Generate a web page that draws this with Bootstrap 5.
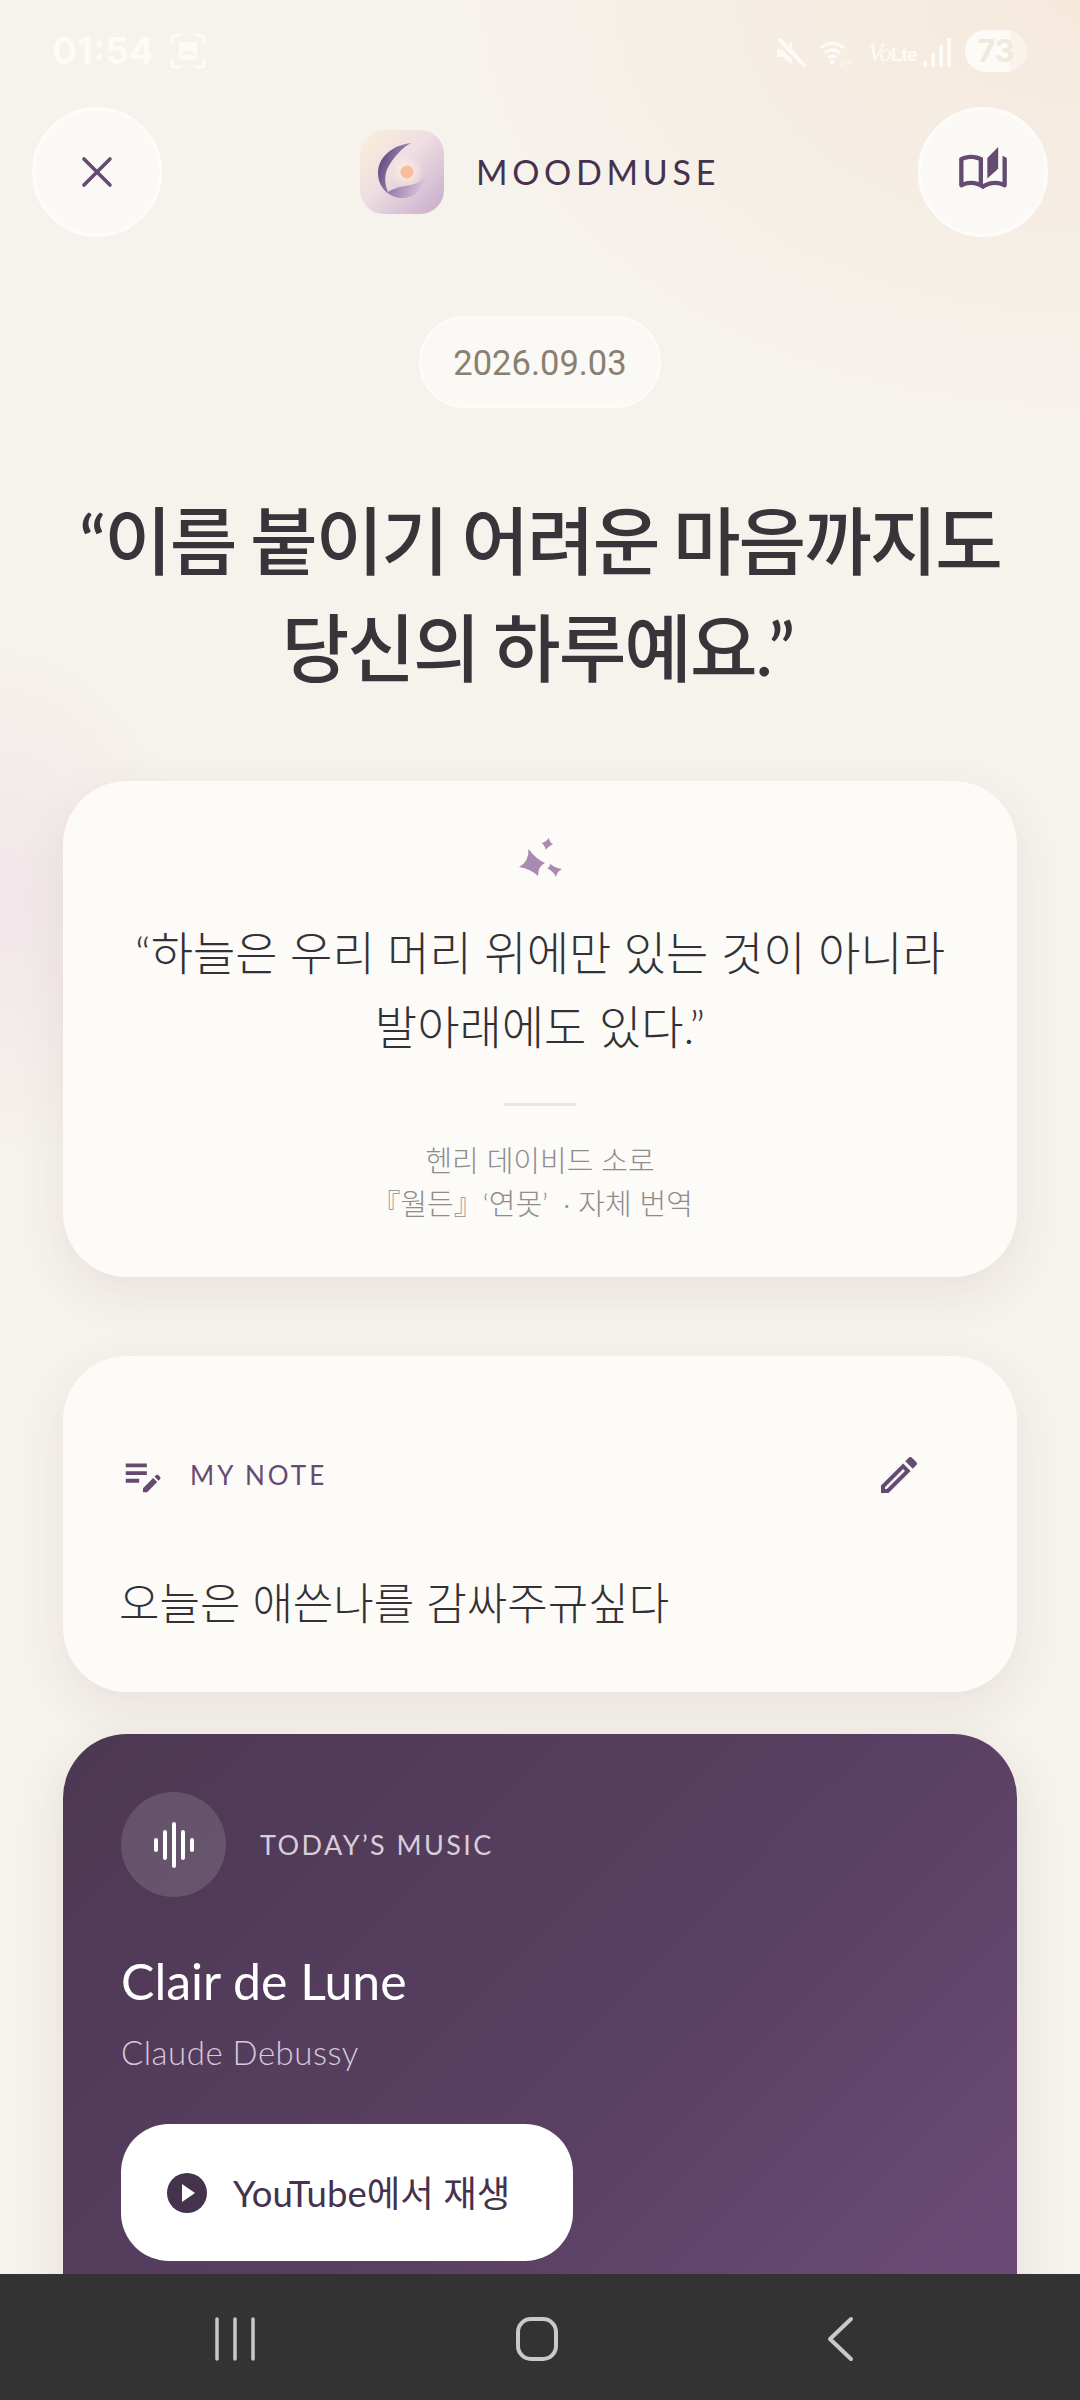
<!DOCTYPE html>
<html lang="ko">
<head>
  <meta charset="UTF-8">
  <meta name="viewport" content="width=device-width, initial-scale=1.0">
  <title>MoodMuse</title>
  <link href="https://cdn.jsdelivr.net/npm/bootstrap@5.3.0/dist/css/bootstrap.min.css" rel="stylesheet">
  <style>
    html, body { height: 100%; }
    body {
      width: 1080px;
      height: 2400px;
      overflow: hidden;
      font-family: Lato, "Noto Sans CJK KR", sans-serif;
      color: #3a3338;
      background:
        radial-gradient(190px 260px at 0 900px, rgba(238, 222, 232, .6), rgba(238, 222, 232, 0)),
        radial-gradient(620px 420px at 1080px 0, #f5e9dc, rgba(245, 233, 220, 0)),
        #f6f2ec;
    }
    /* barra de status */
    .mm-status { height: 107px; padding: 30px 53px 0 52px; color: #fdfbf8; }
    .mm-time { font: 700 37px/42px Inter, sans-serif; }
    .mm-volte { font-size: 26px; line-height: 30px; width: 41px; white-space: nowrap; letter-spacing: -1px; }
    .mm-volte i { font-family: "Liberation Serif", serif; font-size: 25px; }
    .mm-volte b { font-family: "Liberation Sans", sans-serif; font-size: 19px; }
    .mm-batt {
      width: 62px; height: 42px; border-radius: 21px;
      background: linear-gradient(90deg, #fdfbf8 73%, #f9f3ec 73%);
      color: #f2e8dc; font: 700 31px/42px Inter, sans-serif; text-align: center;
    }
    .mm-icons { gap: 14px; }
    /* topo */
    .mm-top { padding: 0 32px; height: 130px; }
    .mm-round {
      width: 130px; height: 130px; border-radius: 50%;
      background: #fbf9f6; border: 3px solid #fdfcfa; padding: 0;
    }
    .mm-brand { gap: 32px; }
    .mm-logo { width: 84px; height: 84px; display: block; }
    .mm-brandname { font: 400 34px/40px Lato, sans-serif; letter-spacing: 4.7px; color: #45324d; }
    .mm-date {
      margin-top: 79px; width: 242px; height: 92px; border-radius: 46px;
      background: #fbf9f6; border: 2px solid #fdfcfa;
      font: 400 34.500px/90px Roboto, sans-serif; color: #8a8071; text-align: center;
    }
    .mm-title {
      margin: 79px 0 0; font: 500 73.500px/107px Lato, "Noto Sans CJK KR", sans-serif;
      letter-spacing: -2px; word-spacing: -2px; color: #39343a; text-align: center;
    }
    .mm-endq { letter-spacing: 3px; }
    /* cards */
    .mm-wrap { padding: 0 63px; }
    .mm-card {
      border: 0; border-radius: 64px; background: #fcfbf8;
      box-shadow: 0 16px 50px rgba(90, 70, 70, .09);
    }
    .mm-quote { margin-top: 80px; height: 496px; text-align: center; padding-top: 57px; }
    .mm-spark { display: block; margin: 0 auto; width: 43px; height: 40px; }
    .mm-qtext {
      margin: 38px 0 0; font: 300 46px/74px Lato, "Noto Sans CJK KR", sans-serif; color: #333135;
    }
    .mm-rule { width: 72px; height: 3px; background: #ece4ec; margin: 39px auto 0; }
    .mm-src { margin: 33px 0 0; font: 300 29px/43px Lato, "Noto Sans CJK KR", sans-serif; color: #8f8d8c; }
    .mm-note { margin-top: 79px; height: 336px; padding: 95px 57px 0 57px; }
    .mm-label { font: 400 26px/32px Lato, sans-serif; letter-spacing: 3px; color: #654a72; }
    .mm-notetext { margin: 74px -1px 0 -1px; font: 300 44px/60px Lato, "Noto Sans CJK KR", sans-serif; color: #333135; }
    .mm-music {
      margin-top: 42px; height: 700px; padding: 58px 58px 0;
      background: linear-gradient(135deg, #4d3853, #5a4063 55%, #6a4a74 85%);
      color: #fff; box-shadow: 0 16px 50px rgba(90, 70, 70, .12);
    }
    .mm-wave {
      width: 105px; height: 105px; border-radius: 50%;
      background: rgba(255, 255, 255, .13);
    }
    .mm-mlabel { font: 400 27px/32px Lato, sans-serif; letter-spacing: 2.4px; color: #d8cddb; }
    .mm-song { margin: 53px 0 0; font: 400 50px/62px Lato, sans-serif; color: #fff; }
    .mm-artist { margin: 20px 0 0; font: 300 33px/40px Lato, sans-serif; letter-spacing: .5px; color: #d6cad9; }
    .mm-play {
      margin-top: 52px; width: 452px; height: 137px; border-radius: 48px;
      background: #fff; border: 0; padding: 0 0 0 46px; gap: 26px;
      font: 400 36.500px/46px Lato, "Noto Sans CJK KR", sans-serif; color: #45324d;
    }
    .mm-play:hover { background: #fff; color: #45324d; }
    /* barra de navegação */
    .mm-navbar { height: 126px; background: #333; padding-top: 4px; }
    .mm-main { min-height: 0; overflow: hidden; }
  </style>
</head>
<body class="d-flex flex-column">
  <div class="mm-main flex-grow-1">
    <div class="mm-status d-flex justify-content-between align-items-start">
      <div class="d-flex align-items-center gap-3">
        <span class="mm-time">01:54</span>
        <svg width="36" height="36" viewBox="0 0 36 36" fill="none">
          <path d="M2 10V5a3 3 0 0 1 3-3h5M26 2h5a3 3 0 0 1 3 3v5M34 26v5a3 3 0 0 1-3 3h-5M10 34H5a3 3 0 0 1-3-3v-5" stroke="#fdfbf8" stroke-width="3" stroke-linecap="round"/>
          <path d="M12 9h12a3 3 0 0 1 3 3v12a3 3 0 0 1-3 3H12a3 3 0 0 1-3-3V12a3 3 0 0 1 3-3z" fill="#fdfbf8"/>
          <path d="M11 22l5-5 2 2 3-3 4 5v1H11z" fill="#f6f1eb"/>
        </svg>
      </div>
      <div class="mm-icons d-flex align-items-center">
        <svg width="30" height="30" viewBox="0 0 30 30" class="mt-1">
          <path d="M1 11h6l9-8v24l-9-8H1z" fill="#fdfbf8"/>
          <path d="M2 2l27 27" stroke="#f5ebe0" stroke-width="7"/>
          <path d="M3 1l26 27" stroke="#fdfbf8" stroke-width="4"/>
        </svg>
        <svg width="34" height="30" viewBox="0 0 36 30" fill="none" class="mt-1">
          <path d="M1 10c7-7 17-7 24 0M5 15c5-4.500 11-4.500 16 0M9 20c2.500-2 5.500-2 8 0" stroke="#fdfbf8" stroke-width="3.500"/>
          <circle cx="13" cy="25" r="2.500" fill="#fdfbf8"/>
          <path d="M24 24v5M21 26l3 3 3-3M31 29v-7M28 25l3-3 3 3" stroke="#f9f3ec" stroke-width="2"/>
        </svg>
        <span class="mm-volte mt-1"><i>Vo</i><b>Lte</b></span>
        <svg width="28" height="30" viewBox="0 0 28 30" class="mt-1">
          <rect x="0" y="23" width="4" height="6" rx="1" fill="#fdfbf8"/>
          <rect x="8" y="15" width="4" height="14" rx="1" fill="#fdfbf8"/>
          <rect x="16" y="7" width="4" height="22" rx="1" fill="#fdfbf8"/>
          <rect x="24" y="0" width="4" height="29" rx="1" fill="#fdfbf8"/>
        </svg>
        <div class="mm-batt">73</div>
      </div>
    </div>

    <div class="mm-top d-flex justify-content-between align-items-center">
      <button type="button" class="mm-round btn d-flex align-items-center justify-content-center" aria-label="닫기">
        <svg width="34" height="34" viewBox="0 0 34 34" fill="none"><path d="M4 4l26 26M30 4L4 30" stroke="#654a72" stroke-width="3.600" stroke-linecap="round"/></svg>
      </button>
      <div class="mm-brand d-flex align-items-center">
        <svg class="mm-logo" viewBox="0 0 84 84">
          <defs>
            <linearGradient id="lbg" x1="0" y1="0" x2="1" y2="1">
              <stop offset="0" stop-color="#fdf0d9"/><stop offset=".45" stop-color="#eedde2"/><stop offset="1" stop-color="#c5abcb"/>
            </linearGradient>
            <linearGradient id="lmoon" x1="0" y1=".3" x2="1" y2=".7">
              <stop offset="0" stop-color="#5f4a7c"/><stop offset=".45" stop-color="#9c82ae"/><stop offset="1" stop-color="#dbc6d8"/>
            </linearGradient>
            <radialGradient id="lglow"><stop offset="0" stop-color="#fff3df"/><stop offset="1" stop-color="#fff3df" stop-opacity="0"/></radialGradient>
          </defs>
          <rect width="84" height="84" rx="24" fill="url(#lbg)"/>
          <circle cx="47" cy="42" r="17" fill="url(#lglow)"/>
          <path d="M51 13C33 15 18 27 18 43c0 15 12 25 24 25 12 0 21-8 24-21-6 6-14 8-21 9-7 1-14 4-17 6-4-10-4-19 2-28 5-8 12-16 21-21z" fill="url(#lmoon)"/>
          <circle cx="47" cy="42" r="6.500" fill="#f7bd9c"/>
        </svg>
        <span class="mm-brandname">MOODMUSE</span>
      </div>
      <button type="button" class="mm-round btn d-flex align-items-center justify-content-center" aria-label="기록">
        <svg width="52" height="52" viewBox="0 0 24 24" fill="#654a72">
          <path d="M22.47 5.200C22 4.960 21.510 4.760 21 4.590v12.030C19.860 16.210 18.690 16 17.500 16c-1.900 0-3.780.54-5.500 1.580V5.480C10.380 4.550 8.510 4 6.500 4 4.710 4 3.020 4.440 1.530 5.200 1.200 5.360 1 5.710 1 6.080v12.080c0 .58.47.99 1 .99.16 0 .32-.04.48-.12C3.690 18.400 5.050 18 6.500 18c2.070 0 3.980.82 5.500 2 1.520-1.180 3.430-2 5.500-2 1.450 0 2.810.4 4.020 1.040.16.08.32.12.48.12.52 0 1-.41 1-.99V6.080c0-.37-.2-.72-.53-.88zM10 16.620C8.860 16.210 7.690 16 6.500 16s-2.360.21-3.500.62V6.710C4.110 6.240 5.280 6 6.500 6c1.200 0 2.390.25 3.500.72v9.900z"/>
          <path d="M19 .5l-5 5V15l5-4.500V.5z"/>
        </svg>
      </button>
    </div>

    <div class="d-flex justify-content-center">
      <div class="mm-date">2026.09.03</div>
    </div>

    <h1 class="mm-title">“이름 붙이기 어려운 마음까지도<br>당신의 하루예요<span class="mm-endq">.”</span></h1>

    <div class="mm-wrap">
      <div class="card mm-card mm-quote">
        <svg class="mm-spark" viewBox="0 0 43 40" fill="#a88bb0">
          <path d="M9.500 11Q17 21 26 25 19 28 19 38 12 31 0 29 10 24 9.500 11z"/>
          <path d="M30 0q.5 4 4 6.500-4 1-7.500 5.500 0-4-4-7 4-.5 7.500-5z"/>
          <path d="M31 25.700q4 4 12 5.300-5 2.500-6 8-2-5-9-9 3-.5 3-4.300z"/>
        </svg>
        <p class="mm-qtext">“하늘은 우리 머리 위에만 있는 것이 아니라<br>발아래에도 있다.”</p>
        <div class="mm-rule"></div>
        <p class="mm-src">헨리 데이비드 소로<br>『월든』‘연못’&nbsp; · 자체 번역&nbsp;&nbsp;</p>
      </div>

      <div class="card mm-card mm-note">
        <div class="d-flex justify-content-between align-items-center">
          <div class="d-flex align-items-center" style="gap:24px">
            <svg width="46" height="46" viewBox="0 0 24 24" fill="#654a72"><path d="M3 10h11v2H3v-2zm0-2h11V6H3v2zm0 8h7v-2H3v2zm15.010-3.130.71-.71c.39-.39 1.020-.39 1.410 0l.71.71c.39.39.39 1.020 0 1.410l-.71.71-2.120-2.120zm-.71.71-5.300 5.300V21h2.120l5.300-5.300-2.120-2.120z"/></svg>
            <span class="mm-label">MY NOTE</span>
          </div>
          <svg width="48" height="48" viewBox="0 0 24 24" fill="#654a72" style="margin-right:37px"><path d="M3 17.250V21h3.750L17.810 9.940l-3.750-3.750L3 17.250zM5.920 19H5v-.92l9.060-9.060.92.92L5.920 19zM20.710 5.630l-2.340-2.340c-.2-.2-.45-.29-.71-.29s-.51.1-.7.29l-1.830 1.830 3.750 3.750 1.830-1.830c.39-.39.39-1.020 0-1.410z"/></svg>
        </div>
        <p class="mm-notetext">오늘은 애쓴나를 감싸주규싶다</p>
      </div>

      <div class="card mm-card mm-music">
        <div class="d-flex align-items-center" style="gap:34px">
          <div class="mm-wave d-flex align-items-center justify-content-center">
            <svg width="40" height="46" viewBox="0 0 40 46" fill="none" stroke="#fff" stroke-width="4" stroke-linecap="round">
              <path d="M2 18v10M11 10v26M20 2v42M29 10v26M38 18v10"/>
            </svg>
          </div>
          <span class="mm-mlabel">TODAY’S MUSIC</span>
        </div>
        <p class="mm-song">Clair de Lune</p>
        <p class="mm-artist">Claude Debussy</p>
        <button type="button" class="mm-play btn d-flex align-items-center">
          <svg width="40" height="40" viewBox="0 0 40 40">
            <circle cx="20" cy="20" r="20" fill="#45324d"/>
            <path d="M15 11l13 9-13 9z" fill="#fff"/>
          </svg>
          <span>YouTube에서 재생</span>
        </button>
      </div>
    </div>
  </div>

  <nav class="mm-navbar d-flex align-items-center flex-shrink-0">
    <svg width="1080" height="46" viewBox="0 0 1080 46" fill="none" stroke="#c9c9c9">
      <path d="M217 3v40M235 3v40M253 3v40" stroke-width="3.500" stroke-linecap="round"/>
      <rect x="518" y="3" width="38" height="40" rx="13" stroke-width="4"/>
      <path d="M851 3l-21 20 21 20" stroke-width="4" stroke-linecap="round" stroke-linejoin="round"/>
    </svg>
  </nav>

  <script src="https://cdn.jsdelivr.net/npm/bootstrap@5.3.0/dist/js/bootstrap.bundle.min.js"></script>
</body>
</html>
